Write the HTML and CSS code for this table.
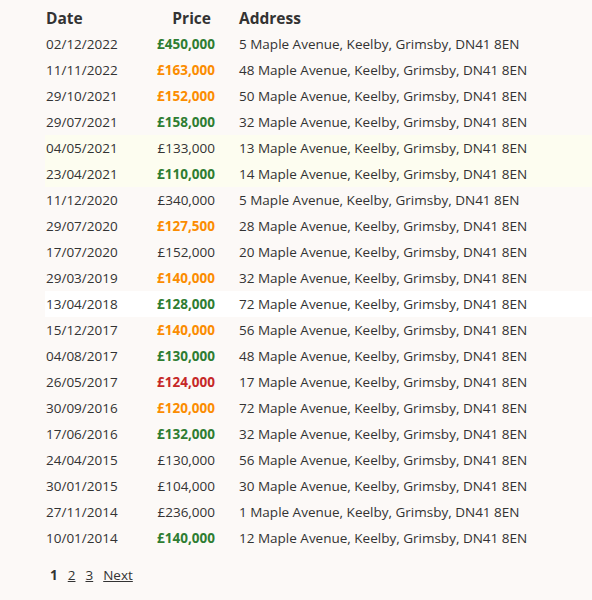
FILE: index.html
```html
<!DOCTYPE html>
<html lang="en">
<head>
    <meta charset="utf-8">
    <title>Sold prices</title>
    <link rel="stylesheet" href="styles.css">
</head>
<body>
<div class="main">
    <table class="sales">
        <thead>
        <tr>
            <th class="col-date">Date</th>
            <th class="col-price">Price</th>
            <th class="col-address">Address</th>
        </tr>
        </thead>
        <tbody>
        <tr><td>02/12/2022</td><td class="price up">£450,000</td><td class="address">5 Maple Avenue, Keelby, Grimsby, DN41 8EN</td></tr>
        <tr><td>11/11/2022</td><td class="price mid">£163,000</td><td class="address">48 Maple Avenue, Keelby, Grimsby, DN41 8EN</td></tr>
        <tr><td>29/10/2021</td><td class="price mid">£152,000</td><td class="address">50 Maple Avenue, Keelby, Grimsby, DN41 8EN</td></tr>
        <tr><td>29/07/2021</td><td class="price up">£158,000</td><td class="address">32 Maple Avenue, Keelby, Grimsby, DN41 8EN</td></tr>
        <tr class="highlight"><td>04/05/2021</td><td class="price">£133,000</td><td class="address">13 Maple Avenue, Keelby, Grimsby, DN41 8EN</td></tr>
        <tr class="highlight"><td>23/04/2021</td><td class="price up">£110,000</td><td class="address">14 Maple Avenue, Keelby, Grimsby, DN41 8EN</td></tr>
        <tr><td>11/12/2020</td><td class="price">£340,000</td><td class="address">5 Maple Avenue, Keelby, Grimsby, DN41 8EN</td></tr>
        <tr><td>29/07/2020</td><td class="price mid">£127,500</td><td class="address">28 Maple Avenue, Keelby, Grimsby, DN41 8EN</td></tr>
        <tr><td>17/07/2020</td><td class="price">£152,000</td><td class="address">20 Maple Avenue, Keelby, Grimsby, DN41 8EN</td></tr>
        <tr><td>29/03/2019</td><td class="price mid">£140,000</td><td class="address">32 Maple Avenue, Keelby, Grimsby, DN41 8EN</td></tr>
        <tr class="hover"><td>13/04/2018</td><td class="price up">£128,000</td><td class="address">72 Maple Avenue, Keelby, Grimsby, DN41 8EN</td></tr>
        <tr><td>15/12/2017</td><td class="price mid">£140,000</td><td class="address">56 Maple Avenue, Keelby, Grimsby, DN41 8EN</td></tr>
        <tr><td>04/08/2017</td><td class="price up">£130,000</td><td class="address">48 Maple Avenue, Keelby, Grimsby, DN41 8EN</td></tr>
        <tr><td>26/05/2017</td><td class="price down">£124,000</td><td class="address">17 Maple Avenue, Keelby, Grimsby, DN41 8EN</td></tr>
        <tr><td>30/09/2016</td><td class="price mid">£120,000</td><td class="address">72 Maple Avenue, Keelby, Grimsby, DN41 8EN</td></tr>
        <tr><td>17/06/2016</td><td class="price up">£132,000</td><td class="address">32 Maple Avenue, Keelby, Grimsby, DN41 8EN</td></tr>
        <tr><td>24/04/2015</td><td class="price">£130,000</td><td class="address">56 Maple Avenue, Keelby, Grimsby, DN41 8EN</td></tr>
        <tr><td>30/01/2015</td><td class="price">£104,000</td><td class="address">30 Maple Avenue, Keelby, Grimsby, DN41 8EN</td></tr>
        <tr><td>27/11/2014</td><td class="price">£236,000</td><td class="address">1 Maple Avenue, Keelby, Grimsby, DN41 8EN</td></tr>
        <tr><td>10/01/2014</td><td class="price up">£140,000</td><td class="address">12 Maple Avenue, Keelby, Grimsby, DN41 8EN</td></tr>
        </tbody>
    </table>
    <div class="pager">
        <span class="current">1</span>
        <a href="#">2</a>
        <a href="#">3</a>
        <a href="#">Next</a>
    </div>
</div>
</body>
</html>
```

FILE: styles.css
```css
body {
    margin: 0;
    background: #fcf9f7;
    color: #333;
    font-family: "Open Sans", "Liberation Sans", sans-serif;
    font-size: 13.5px;
}

.main {
    padding: 5px 0 0 45px;
}

.sales {
    width: 100%;
    table-layout: fixed;
    border-collapse: collapse;
}

.sales th,
.sales td {
    height: 26px;
    padding: 0 1px;
    text-align: left;
    white-space: nowrap;
}

.sales th {
    font-size: 15.5px;
    font-weight: 700;
}

.col-date {
    width: 103px;
}

.col-price {
    width: 60px;
}

.sales th.col-price {
    text-align: right;
    padding-right: 6px;
}

.sales td.price {
    text-align: right;
    padding-right: 2px;
}

.sales th.col-address,
.sales td.address {
    padding-left: 22px;
}

.price.up {
    color: #2e7d32;
    font-weight: 700;
}

.price.mid {
    color: #fb8c00;
    font-weight: 700;
}

.price.down {
    color: #c62828;
    font-weight: 700;
}

.highlight {
    background: #fdfdf0;
}

.hover {
    background: #fff;
}

.pager {
    display: flex;
    gap: 10px;
    padding: 15px 0 0 5px;
}

.pager .current {
    font-weight: 700;
}

.pager a {
    color: #333;
}
```
